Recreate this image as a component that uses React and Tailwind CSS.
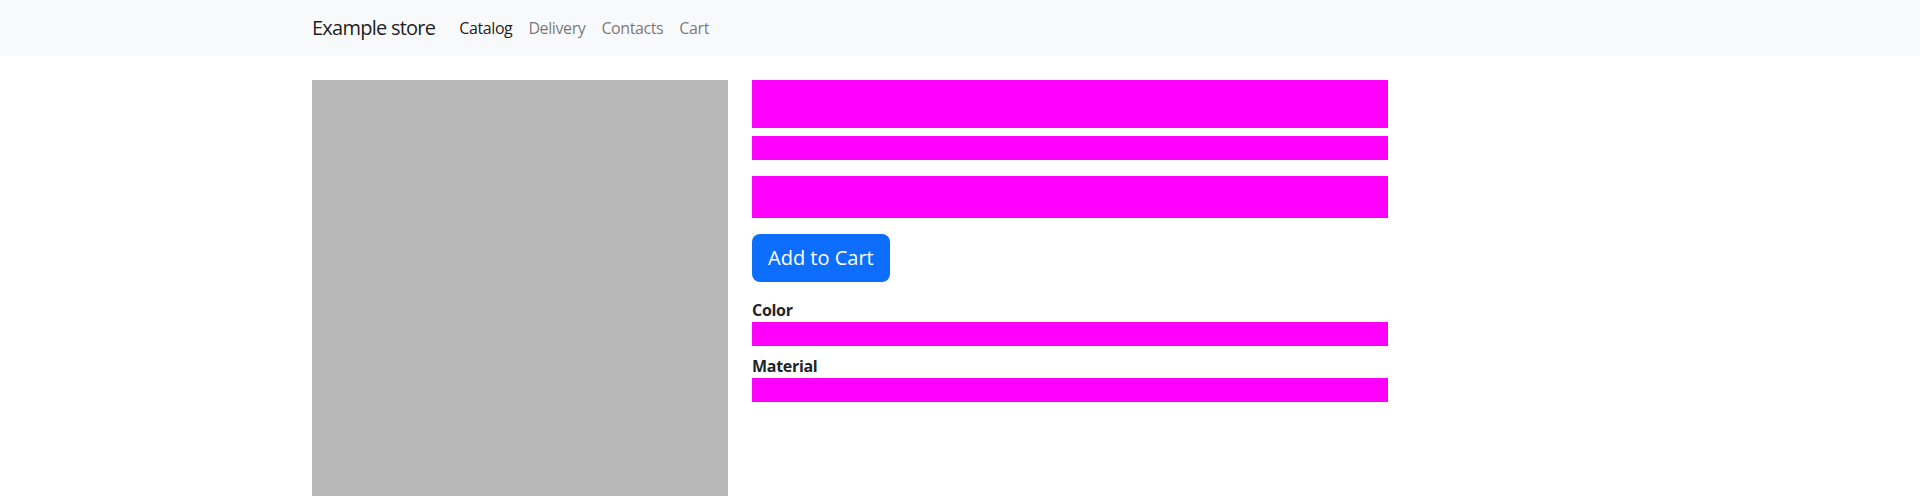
import React from 'react';

const font = { fontFamily: '"Open Sans", "Noto Sans", sans-serif' };

const Navbar = () => (
  <nav className="bg-[#f8f9fa] h-[56px]">
    <div className="mx-auto max-w-[1320px] px-3 h-full flex items-center">
      <a className="text-[20px] leading-[30px] text-black/90 mr-4 tracking-[-0.75px]">Example store</a>
      <ul className="flex items-center text-[16px] leading-6 tracking-[-0.4px]">
        <li><a className="block px-2 text-black/90">Catalog</a></li>
        <li><a className="block px-2 text-black/55">Delivery</a></li>
        <li><a className="block px-2 text-black/55">Contacts</a></li>
        <li><a className="block px-2 text-black/55">Cart</a></li>
      </ul>
    </div>
  </nav>
);

const Bar = ({ className }) => <div className={'bg-[#ff00ff] relative z-10 ' + className} />;

const Label = ({ children, className = '' }) => (
  <div className={'font-bold text-[16px] leading-6 text-[#212529] tracking-[-0.3px] ' + className}>{children}</div>
);

export default function App() {
  return (
    <div className="bg-white min-h-screen text-[#212529]" style={font}>
      <Navbar />
      <div className="mx-auto max-w-[1320px] px-3 mt-6">
        <div className="flex gap-6">
          <div className="w-[416px] h-[416px] bg-[#b8b8b8] shrink-0" />
          <div className="w-[636px] flex flex-col items-start">
            <Bar className="w-full h-12" />
            {/* label mostly hidden behind the title block, only the descender shows */}
            <div className="h-[8px] w-full overflow-hidden">
              <Label className="-mt-[24px]">Category</Label>
            </div>
            <Bar className="w-full h-6" />
            <Bar className="w-full h-[42px] mt-4" />
            <button className="mt-4 h-12 px-4 rounded-lg bg-[#0d6efd] text-white text-[20px] leading-[30px] tracking-[0px]">
              Add to Cart
            </button>
            <Label className="mt-4">Color</Label>
            <Bar className="w-full h-6" />
            <Label className="mt-2">Material</Label>
            <Bar className="w-full h-6" />
          </div>
        </div>
      </div>
    </div>
  );
}
